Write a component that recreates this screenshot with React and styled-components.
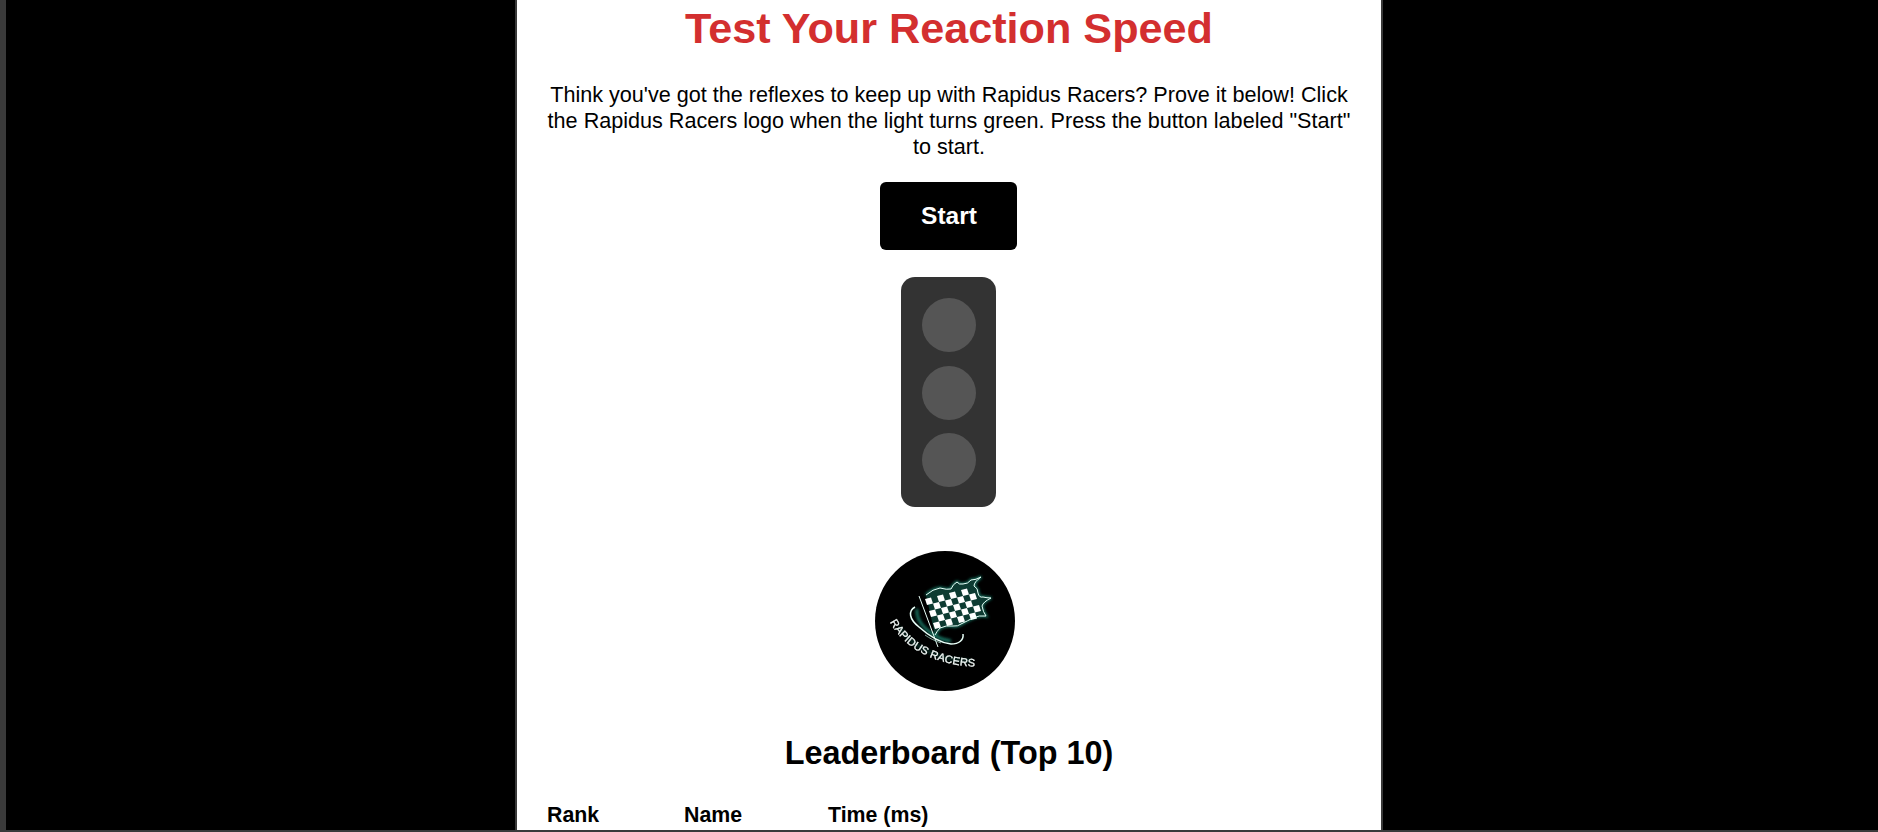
import styled, { createGlobalStyle } from "styled-components";

const GlobalStyle = createGlobalStyle`
  html, body {
    margin: 0;
    height: 100%;
    overflow: hidden;
    background: #000;
    font-family: "Liberation Sans", Arial, sans-serif;
  }
`;

const Page = styled.div`
  height: 832px;
  box-sizing: border-box;
  background: #000;
  border-left: 6px solid #3a3a3a;
  border-bottom: 2px solid #3a3a3a;
  display: flex;
  justify-content: center;
  overflow: hidden;
  padding-left: 14px;
`;

const Panel = styled.main`
  width: 868px;
  box-sizing: border-box;
  height: 100%;
  background: #fff;
  border-left: 2px solid #3a3a3a;
  border-right: 2px solid #3a3a3a;
  padding: 0 30px;
  display: flex;
  flex-direction: column;
  align-items: center;
  overflow: hidden;
`;

const Title = styled.h1`
  margin: 4px 0 0;
  font-size: 43.2px;
  line-height: 49px;
  font-weight: 700;
  color: #d32f2f;
  text-align: center;
  white-space: nowrap;
`;

const Intro = styled.p`
  margin: 29px -6px 0;
  font-size: 21.6px;
  line-height: 26px;
  color: #000;
  text-align: center;
`;

const StartButton = styled.button`
  margin: 22px 2px 0 0;
  width: 137px;
  height: 68px;
  padding: 0 0 0 2px;
  background: #000;
  color: #fff;
  border: none;
  border-radius: 6px;
  font-family: inherit;
  font-size: 24.5px;
  font-weight: 700;
  cursor: pointer;
`;

const TrafficLight = styled.div`
  margin: 27px 2px 0 0;
  width: 95px;
  height: 230px;
  box-sizing: border-box;
  padding: 21px 0 20px 1px;
  background: #333;
  border-radius: 14px;
  display: flex;
  flex-direction: column;
  align-items: center;
  justify-content: space-between;
`;

const Lamp = styled.div`
  width: 54px;
  height: 54px;
  border-radius: 50%;
  background: #555;
`;

const LogoButton = styled.div`
  margin: 44px 8px 0 0;
  width: 140px;
  height: 140px;
  border-radius: 50%;
  background: #000;
  overflow: hidden;
  flex-shrink: 0;
`;

const SectionTitle = styled.h2`
  margin: 44px 0 0;
  font-size: 32.4px;
  line-height: 37px;
  font-weight: 700;
  color: #000;
  text-align: center;
`;

const Board = styled.table`
  align-self: flex-start;
  margin-top: 31px;
  border-collapse: collapse;
  font-size: 21.33px;
  color: #000;
`;

const HeadCell = styled.th`
  padding: 0;
  width: ${(p) => p.$w}px;
  text-align: left;
  font-weight: 700;
  line-height: 25px;
`;

const flagOutline =
  "M51 44 Q58 38 65 37 Q72 39 76 38 Q78 33 82 31 Q84 34 88 33 Q93 33 96 29 Q101 29 106 26 Q99 31 99 35 Q103 37 103 42 Q104 47 108 46 Q112 47 116 47 Q108 51 107 55 Q108 61 111 65 Q104 64 98 67 Q92 70 88 72 Q82 76 78 75 Q71 74 65 77 Q62 80 60 84";

function Logo() {
  const squares = [];
  for (let c = 0; c < 8; c++) {
    for (let r = 0; r < 5; r++) {
      if ((c + r) % 2 === 0) {
        squares.push(<rect key={`${c}-${r}`} x={c} y={r} width="1" height="1" fill="#fff" />);
      }
    }
  }

  return (
    <svg width="140" height="140" viewBox="0 0 140 140">
      <defs>
        <filter id="soft" x="-20%" y="-20%" width="140%" height="140%">
          <feGaussianBlur stdDeviation="0.55" />
        </filter>
        <filter id="glow" x="-30%" y="-30%" width="160%" height="160%">
          <feGaussianBlur stdDeviation="1.8" />
        </filter>
        <path id="logoArc" d="M15 71 C28 96 60 117 112 116" />
      </defs>
      <g filter="url(#glow)" fill="none" stroke="#1c8a74" strokeWidth="2.5">
        <path d={flagOutline} />
        <path d="M42 58 C40 72 58 88 76 90" />
        <path d="M24 76 C34 92 60 110 96 110" strokeOpacity="0.4" />
      </g>
      <g filter="url(#soft)">
        <path d={`${flagOutline} Z`} fill="#0a3a31" />
        <g transform="matrix(6 -1.5 2 6 50 48)">{squares}</g>
        <path d={flagOutline} fill="none" stroke="#e8fff8" strokeWidth="1" />
        <path d="M44 45 L63 96" stroke="#e8fff8" strokeWidth="1" />
        <path d="M40 56 C33 60 34 68 44 76 C54 85 66 92 76 93 C84 93 89 89 88 83" fill="none" stroke="#e8fff8" strokeWidth="1.5" />
        <path d="M50 84 C54 87 60 90 66 92" fill="none" stroke="#9fc9bd" strokeWidth="0.8" />
        <text
          fontFamily="'Liberation Sans', Arial, sans-serif"
          fontSize="11"
          fill="#f2f8f6"
          stroke="#f2f8f6"
          strokeWidth="0.3"
          letterSpacing="0.2"
        >
          <textPath href="#logoArc">RAPIDUS RACERS</textPath>
        </text>
      </g>
    </svg>
  );
}

export default function App() {
  return (
    <Page>
      <GlobalStyle />
      <Panel>
        <Title>Test Your Reaction Speed</Title>
        <Intro>
          Think you've got the reflexes to keep up with Rapidus Racers? Prove it below! Click the Rapidus Racers logo
          when the light turns green. Press the button labeled "Start" to start.
        </Intro>
        <StartButton>Start</StartButton>
        <TrafficLight>
          <Lamp />
          <Lamp />
          <Lamp />
        </TrafficLight>
        <LogoButton>
          <Logo />
        </LogoButton>
        <SectionTitle>Leaderboard (Top 10)</SectionTitle>
        <Board>
          <thead>
            <tr>
              <HeadCell $w={137}>Rank</HeadCell>
              <HeadCell $w={144}>Name</HeadCell>
              <HeadCell $w={120}>Time (ms)</HeadCell>
            </tr>
          </thead>
        </Board>
      </Panel>
    </Page>
  );
}
